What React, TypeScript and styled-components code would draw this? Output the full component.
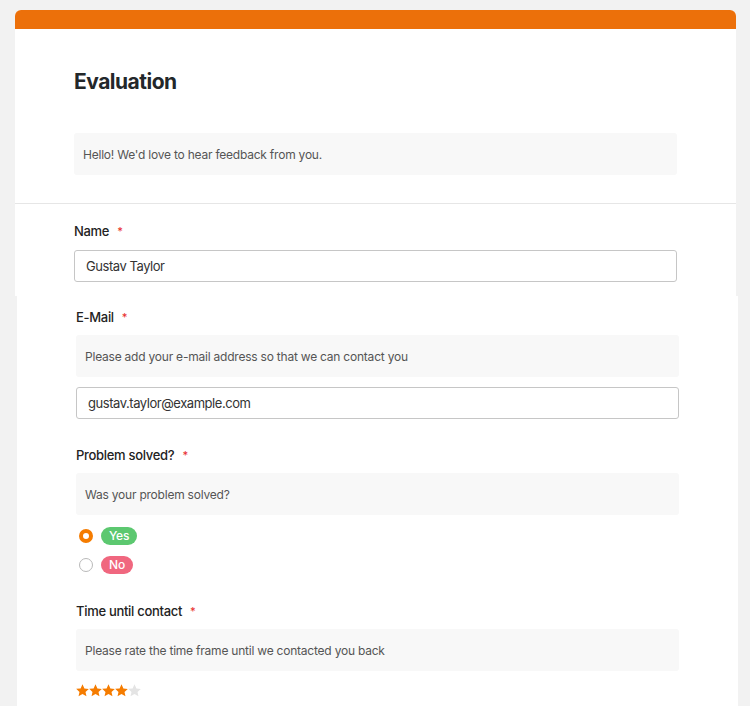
import React from 'react';
import styled, { createGlobalStyle } from 'styled-components';

const GlobalStyle = createGlobalStyle`
    html, body {
        margin: 0;
        padding: 0;
        overflow: hidden;
        background: #f2f2f2;
        font-family: Inter, "Noto Sans", sans-serif;
        color: #222;
    }
`

const Page = styled.div`
    padding: 10px 0 0 15px;
    display: flex;
    flex-direction: column;
`

const Card = styled.div<{ $shift?: number }>`
    width: 721px;
    margin-left: ${p => p.$shift || 0}px;
    background: #fff;
    display: flex;
    flex-direction: column;
`

const HeaderCard = styled(Card)`
    border-radius: 6px 6px 0 0;
    overflow: hidden;
`

const AccentBar = styled.div`
    height: 19px;
    background: #ec700a;
`

const Intro = styled.div`
    padding: 39px 59px 28px;
    border-bottom: 1px solid #e6e6e6;
    display: flex;
    flex-direction: column;
    gap: 37px;
`

const Title = styled.h1`
    margin: 0;
    font-size: 21px;
    line-height: 28px;
    font-weight: 700;
    letter-spacing: -0.5px;
    color: #23272a;
`

const Section = styled.div<{ $top: number; $bottom: number }>`
    padding: ${p => p.$top}px 59px ${p => p.$bottom}px;
    display: flex;
    flex-direction: column;
`

const Field = styled.div<{ $after?: number }>`
    display: flex;
    flex-direction: column;
    gap: 9px;
    margin-bottom: ${p => p.$after || 0}px;
`

const Label = styled.div`
    font-size: 13px;
    line-height: 18px;
    font-weight: 500;
    letter-spacing: -0.3px;
    color: #222;
    display: flex;
    align-items: center;
    gap: 8px;
`

const Required = styled.span`
    color: #e8302f;
    font-size: 11px;
    line-height: 1;
`

const Hint = styled.div`
    background: #f8f8f8;
    border-radius: 3px;
    height: 42px;
    padding: 0 9px;
    display: flex;
    align-items: center;
    font-size: 12px;
    letter-spacing: -0.22px;
    color: #555;
`

const Input = styled.input`
    box-sizing: border-box;
    width: 100%;
    height: 32px;
    margin: 1px 0 0;
    padding: 0 11px;
    border: 1px solid #c6c6c6;
    border-radius: 3px;
    font-family: inherit;
    font-size: 13px;
    letter-spacing: -0.45px;
    color: #333;
    background: #fff;
    outline: none;
`

const Options = styled.div`
    display: flex;
    flex-direction: column;
    gap: 11px;
    margin-top: 3px;
`

const Option = styled.label`
    display: flex;
    align-items: center;
    gap: 8px;
    height: 18px;
    padding-left: 3px;
`

const Radio = styled.span<{ $checked?: boolean }>`
    box-sizing: border-box;
    width: 14px;
    height: 14px;
    border-radius: 50%;
    background: #fff;
    border: ${p => (p.$checked ? '4.5px solid #f57c00' : '1px solid #b9b9b9')};
`

const Pill = styled.span<{ $tone: 'yes' | 'no' }>`
    height: 18px;
    line-height: 18px;
    padding: 0 8px;
    border-radius: 9px;
    font-size: 12px;
    font-weight: 500;
    letter-spacing: -0.2px;
    color: #fff;
    background: ${p => (p.$tone === 'yes' ? '#5cc870' : '#f0677f')};
`

const Stars = styled.div`
    display: flex;
    margin-top: 4px;
`

function Star({ on }: { on: boolean }) {
    return (
        <svg width="13" height="13" viewBox="1 1.2 22 21.5">
            <path
                d="M12 1.5l3.2 6.9 7.5.8-5.6 5.1 1.6 7.4L12 17.9l-6.7 3.8 1.6-7.4-5.6-5.1 7.5-.8z"
                fill={on ? '#f57c00' : '#e4e4e4'}
            />
        </svg>
    )
}

export default function App() {
    return (
        <>
            <GlobalStyle />
            <Page>
                <HeaderCard>
                    <AccentBar />
                    <Intro>
                        <Title>Evaluation</Title>
                        <Hint>Hello! We'd love to hear feedback from you.</Hint>
                    </Intro>
                    <Section $top={18} $bottom={14}>
                        <Field>
                            <Label>Name <Required>*</Required></Label>
                            <Input defaultValue="Gustav Taylor" />
                        </Field>
                    </Section>
                </HeaderCard>
                <Card $shift={2}>
                    <Section $top={12} $bottom={20}>
                        <Field $after={27}>
                            <Label>E-Mail <Required>*</Required></Label>
                            <Hint>Please add your e-mail address so that we can contact you</Hint>
                            <Input defaultValue="gustav.taylor@example.com" />
                        </Field>
                        <Field $after={28}>
                            <Label>Problem solved? <Required>*</Required></Label>
                            <Hint>Was your problem solved?</Hint>
                            <Options>
                                <Option><Radio $checked /><Pill $tone="yes">Yes</Pill></Option>
                                <Option><Radio /><Pill $tone="no">No</Pill></Option>
                            </Options>
                        </Field>
                        <Field>
                            <Label>Time until contact <Required>*</Required></Label>
                            <Hint>Please rate the time frame until we contacted you back</Hint>
                            <Stars>
                                {[1, 2, 3, 4, 5].map(n => <Star key={n} on={n <= 4} />)}
                            </Stars>
                        </Field>
                    </Section>
                </Card>
            </Page>
        </>
    )
}
